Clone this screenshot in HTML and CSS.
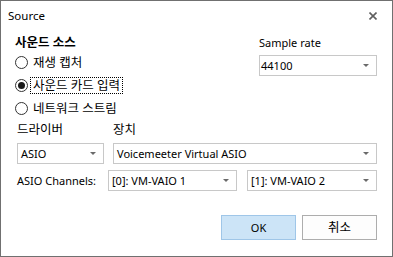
FILE: index.html
```html
<!DOCTYPE html>
<html lang="ko">
<head>
    <meta charset="UTF-8">
    <title>Source</title>
    <link rel="stylesheet" href="styles.css">
</head>
<body>
    <div class="window">
        <div class="titlebar">
            <span class="titleText">Source</span>
            <svg class="close" width="8" height="8" viewBox="0 0 8 8">
                <path d="M0.5 0.5 L7.5 7.5 M7.5 0.5 L0.5 7.5" stroke="#5f5f5f" stroke-width="1.6"/>
            </svg>
        </div>
        <div class="content">
            <div class="top">
                <div class="source">
                    <div class="groupLabel ko">사운드 소스</div>
                    <div class="radioRow">
                        <span class="radio"></span>
                        <span class="radioText ko">재생 캡처</span>
                    </div>
                    <div class="radioRow">
                        <span class="radio checked"></span>
                        <span class="radioText ko focused">사운드 카드 입력</span>
                    </div>
                    <div class="radioRow">
                        <span class="radio"></span>
                        <span class="radioText ko">네트워크 스트림</span>
                    </div>
                </div>
                <div class="rate">
                    <div class="label">Sample rate</div>
                    <div class="combo rateCombo">44100<span class="arrow"></span></div>
                </div>
            </div>
            <div class="lower">
                <div class="deviceRow">
                    <div class="label ko">드라이버</div>
                    <div class="label ko">장치</div>
                    <div class="combo">ASIO<span class="arrow"></span></div>
                    <div class="combo">Voicemeeter Virtual ASIO<span class="arrow"></span></div>
                </div>
                <div class="channelRow">
                    <div class="label">ASIO Channels:</div>
                    <div class="combo">[0]: VM-VAIO 1<span class="arrow"></span></div>
                    <div class="combo">[1]: VM-VAIO 2<span class="arrow"></span></div>
                </div>
            </div>
            <div class="buttons">
                <div class="button default">OK</div>
                <div class="button ko">취소</div>
            </div>
        </div>
    </div>
</body>
</html>
```

FILE: styles.css
```css
* {
    box-sizing: border-box;
}
body {
    margin: 0;
    background-color: #ffffff;
    font-family: "Noto Sans", "Noto Sans CJK KR", sans-serif;
    font-size: 11px;
    color: #000000;
}
.ko {
    font-size: 12.5px;
}
.window {
    width: 393px;
    height: 257px;
    border: 1px solid #707070;
    background-color: #ffffff;
}
.titlebar {
    height: 29px;
    padding: 0 15px 0 7px;
    display: flex;
    align-items: center;
    justify-content: space-between;
}
.titleText {
    font-size: 11.5px;
    line-height: 16px;
}
.close {
    display: block;
}
.content {
    padding: 5px 15px 0 14px;
}
.top {
    display: grid;
    grid-template-columns: 1fr 118px;
}
.groupLabel {
    line-height: 16px;
    font-weight: 600;
}
.radioRow {
    height: 23px;
    display: flex;
    align-items: center;
}
.radio {
    width: 13px;
    height: 13px;
    border: 1px solid #333333;
    border-radius: 50%;
    background-color: #ffffff;
    margin-right: 2px;
    display: flex;
    align-items: center;
    justify-content: center;
}
.radio.checked::after {
    content: "";
    width: 7px;
    height: 7px;
    border-radius: 50%;
    background-color: #1a1a1a;
}
.radioText {
    line-height: 15px;
    padding: 0 2px;
    border: 1px dotted transparent;
}
.radioText.focused {
    border-color: #000000;
}
.label {
    line-height: 16px;
}
.combo {
    position: relative;
    height: 21px;
    border: 1px solid #c8c8c8;
    background-color: #ffffff;
    padding-left: 3px;
    line-height: 19px;
    white-space: nowrap;
}
.rateCombo {
    margin-top: 4px;
    padding-left: 1px;
}
.arrow {
    position: absolute;
    right: 7px;
    top: 8px;
    width: 0;
    height: 0;
    border-left: 3px solid transparent;
    border-right: 3px solid transparent;
    border-top: 3px solid #6a6a6a;
}
.lower {
    padding-left: 2px;
    margin-top: 2px;
}
.deviceRow {
    display: grid;
    grid-template-columns: 87px 1fr;
    column-gap: 9px;
    row-gap: 5px;
}
.channelRow {
    display: grid;
    grid-template-columns: 91px 129px 1fr;
    align-items: center;
    margin-top: 6px;
}
.channelRow .combo:last-child {
    margin-left: 10px;
}
.buttons {
    display: flex;
    justify-content: flex-end;
    gap: 6px;
    margin-top: 24px;
}
.button {
    width: 75px;
    height: 25px;
    border: 1px solid #adadad;
    background-color: #fdfdfd;
    text-align: center;
    line-height: 23px;
}
.button.default {
    background-color: #cce4f7;
    border-color: #9fc6e8;
}
```
